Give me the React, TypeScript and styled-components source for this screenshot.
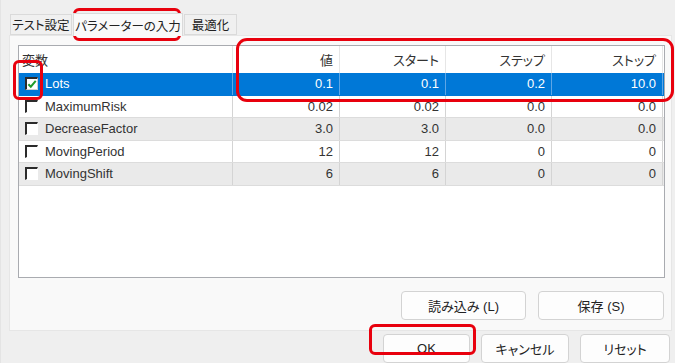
import React from "react";
import styled, { createGlobalStyle } from "styled-components";

type Param = {
  name: string;
  value: string;
  start: string;
  step: string;
  stop: string;
  checked?: boolean;
};

const params: Param[] = [
  { name: "Lots", value: "0.1", start: "0.1", step: "0.2", stop: "10.0", checked: true },
  { name: "MaximumRisk", value: "0.02", start: "0.02", step: "0.0", stop: "0.0" },
  { name: "DecreaseFactor", value: "3.0", start: "3.0", step: "0.0", stop: "0.0" },
  { name: "MovingPeriod", value: "12", start: "12", step: "0", stop: "0" },
  { name: "MovingShift", value: "6", start: "6", step: "0", stop: "0" },
];

const tabs = ["テスト設定", "パラメーターの入力", "最適化"];
const selectedTab = 1;

// red annotation boxes laid over the dialog
const marks = [
  { left: 72, top: 8, width: 108, height: 33, radius: 6 },
  { left: 12, top: 60, width: 30, height: 40, radius: 6 },
  { left: 235, top: 38, width: 438, height: 64, radius: 11 },
  { left: 368, top: 324, width: 107, height: 31, radius: 6 },
];

const COLS = "214px 107px 106px 106px 1fr";

export default function App() {
  return (
    <>
      <GlobalStyle />
      <S.Window>
        <S.TabStrip>
          {tabs.map((t, i) => (
            <S.Tab key={t} $active={i === selectedTab} $w={[62, 110, 53][i]}>
              {t}
            </S.Tab>
          ))}
        </S.TabStrip>
        <S.Panel>
          <S.ListBox>
            <S.HeaderRow>
              <S.HeadCell $left>変数</S.HeadCell>
              <S.HeadCell>値</S.HeadCell>
              <S.HeadCell>スタート</S.HeadCell>
              <S.HeadCell>ステップ</S.HeadCell>
              <S.HeadCell $last>ストップ</S.HeadCell>
            </S.HeaderRow>
            {params.map((p, i) => (
              <S.Row key={p.name} $selected={i === 0} $alt={i % 2 === 0}>
                <S.NameCell>
                  <S.Check $checked={!!p.checked}>
                    {p.checked && (
                      <svg width="11" height="10" viewBox="0 0 11 10">
                        <path
                          d="M1.5 5.2 L4.2 8 L9.6 1.6"
                          fill="none"
                          stroke="#1f9b2c"
                          strokeWidth="2.2"
                        />
                      </svg>
                    )}
                  </S.Check>
                  {p.name}
                </S.NameCell>
                <S.Cell>{p.value}</S.Cell>
                <S.Cell>{p.start}</S.Cell>
                <S.Cell>{p.step}</S.Cell>
                <S.Cell $last>{p.stop}</S.Cell>
              </S.Row>
            ))}
          </S.ListBox>
          <S.ButtonRow>
            <S.Button $w={125}>読み込み (L)</S.Button>
            <S.Button $w={126}>保存 (S)</S.Button>
          </S.ButtonRow>
        </S.Panel>
        <S.DialogButtons>
          <S.Button $w={87}>OK</S.Button>
          <S.Button $w={88}>キャンセル</S.Button>
          <S.Button $w={90}>リセット</S.Button>
        </S.DialogButtons>
        {marks.map((m, i) => (
          <S.Mark
            key={i}
            $r={m.radius}
            style={{ left: m.left, top: m.top, width: m.width, height: m.height }}
          />
        ))}
      </S.Window>
    </>
  );
}

const GlobalStyle = createGlobalStyle`
  html, body {
    margin: 0;
    padding: 0;
    background: #f0f0f0;
  }
  body {
    font-family: "Liberation Sans", "Noto Sans CJK JP", sans-serif;
    font-size: 13px;
    color: #333;
    font-feature-settings: "palt";
  }
  #root {
    width: 675px;
    height: 363px;
    overflow: hidden;
  }
`;

const S = {
  Window: styled.div`
    position: relative;
    box-sizing: border-box;
    width: 675px;
    height: 363px;
    padding: 14px 3px 0 8px;
    background: #efefef;
    border-left: 1px solid #e4e4e4;
    display: flex;
    flex-direction: column;
  `,
  TabStrip: styled.div`
    display: flex;
    align-items: flex-end;
    height: 21px;
    padding-left: 1px;
    gap: 1px;
  `,
  Tab: styled.div<{ $active: boolean; $w: number }>`
    box-sizing: border-box;
    width: ${(p) => p.$w}px;
    height: ${(p) => (p.$active ? 23 : 21)}px;
    margin-bottom: ${(p) => (p.$active ? -1 : 0)}px;
    display: flex;
    align-items: center;
    justify-content: center;
    font-size: 12.5px;
    color: #222;
    white-space: nowrap;
    background: ${(p) => (p.$active ? "#f9f9f9" : "#f0f0f0")};
    border: 1px solid #dadada;
    border-bottom: ${(p) => (p.$active ? "none" : "1px solid #dadada")};
    position: relative;
    z-index: ${(p) => (p.$active ? 1 : 0)};
  `,
  Panel: styled.div`
    box-sizing: border-box;
    width: 663px;
    display: flex;
    flex-direction: column;
    padding: 9px 6px 10px 8px;
    background: #f9f9f9;
    border: 1px solid #e6e6e6;
  `,
  ListBox: styled.div`
    box-sizing: border-box;
    height: 233px;
    background: #fff;
    border: 1px solid #a9abb0;
    display: flex;
    flex-direction: column;
  `,
  HeaderRow: styled.div`
    display: grid;
    grid-template-columns: ${COLS};
    height: 27px;
    flex: none;
    background: #fff;
  `,
  HeadCell: styled.div<{ $left?: boolean; $last?: boolean }>`
    display: flex;
    align-items: flex-end;
    justify-content: ${(p) => (p.$left ? "flex-start" : "flex-end")};
    padding: 0 ${(p) => (p.$left ? 0 : 6)}px 4px ${(p) => (p.$left ? 3 : 0)}px;
    color: #333;
    white-space: nowrap;
    border-right: 1px solid #e6e6e6;
    ${(p) => (p.$last ? "margin-right: 1px;" : "")}
  `,
  Row: styled.div<{ $selected: boolean; $alt: boolean }>`
    box-sizing: border-box;
    display: grid;
    grid-template-columns: ${COLS};
    height: 22.5px;
    flex: none;
    background: ${(p) => (p.$selected ? "#0078d7" : p.$alt ? "#eaeaea" : "#fff")};
    color: ${(p) => (p.$selected ? "#fff" : "#333")};
    border-bottom: 1px solid ${(p) => (p.$selected ? "#0078d7" : "#dcdcdc")};
    --sep: ${(p) => (p.$selected ? "#5ea6e6" : "#d4d4d4")};
  `,
  NameCell: styled.div`
    display: flex;
    align-items: center;
    gap: 7px;
    padding-left: 6px;
    white-space: nowrap;
    border-right: 1px solid var(--sep);
  `,
  Cell: styled.div<{ $last?: boolean }>`
    display: flex;
    align-items: center;
    justify-content: flex-end;
    padding-right: 6px;
    border-right: 1px solid var(--sep);
    ${(p) => (p.$last ? "margin-right: 1px;" : "")}
  `,
  Check: styled.span<{ $checked: boolean }>`
    box-sizing: border-box;
    width: 13px;
    height: 13px;
    flex: none;
    display: flex;
    align-items: center;
    justify-content: center;
    background: #fff;
    border-top: 2px solid #2b2b2b;
    border-left: 2px solid #2b2b2b;
    border-right: 1px solid ${(p) => (p.$checked ? "#d0d0d0" : "#fff")};
    border-bottom: 1px solid ${(p) => (p.$checked ? "#d0d0d0" : "#fff")};
  `,
  ButtonRow: styled.div`
    display: flex;
    justify-content: flex-end;
    gap: 12px;
    margin-top: 13px;
    padding-right: 1px;
  `,
  Button: styled.div<{ $w: number }>`
    box-sizing: border-box;
    width: ${(p) => p.$w}px;
    height: 29px;
    flex: none;
    display: flex;
    align-items: center;
    justify-content: center;
    background: #fdfdfd;
    border: 1px solid #d3d3d3;
    border-radius: 4px;
    color: #222;
    font-size: 13px;
  `,
  DialogButtons: styled.div`
    display: flex;
    justify-content: flex-end;
    gap: 11px;
    margin-top: 3px;
    padding-right: 2px;
  `,
  Mark: styled.div<{ $r: number }>`
    position: absolute;
    box-sizing: border-box;
    border: 3px solid #e8000d;
    border-radius: ${(p) => p.$r}px;
    pointer-events: none;
  `,
};
